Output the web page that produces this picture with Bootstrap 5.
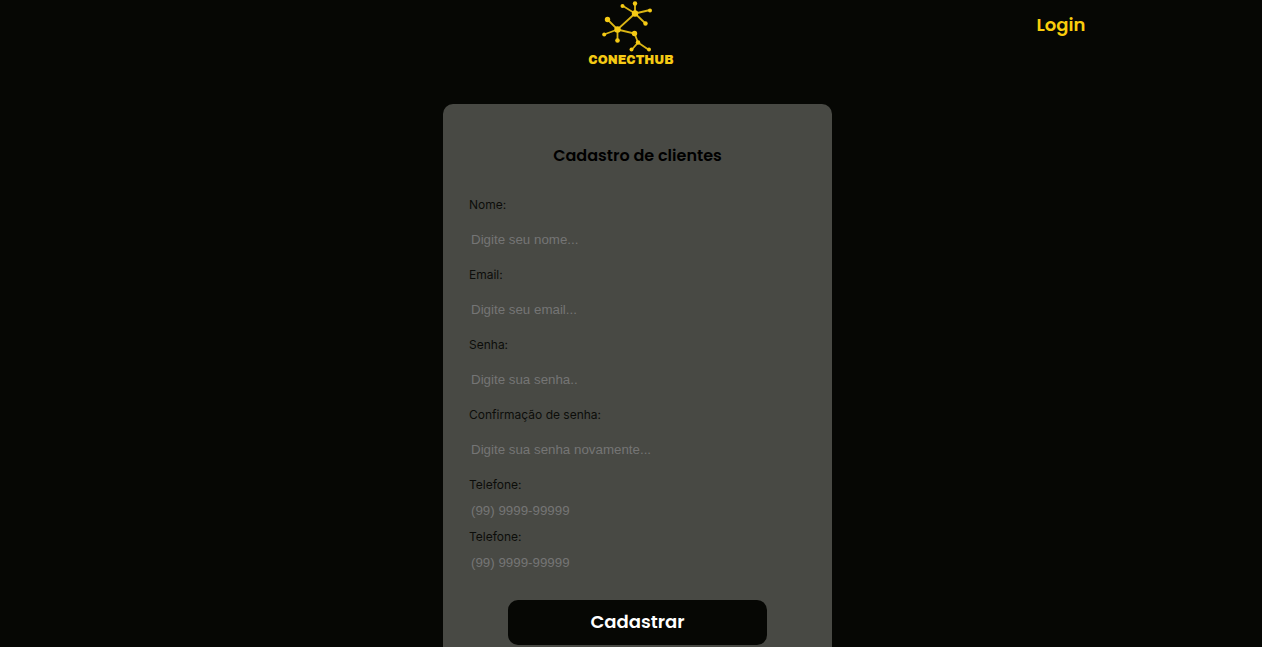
<!DOCTYPE html>
<html lang="pt-BR">
<head>
<meta charset="utf-8">
<meta name="viewport" content="width=device-width, initial-scale=1">
<title>ConectHub - Cadastro de clientes</title>
<link href="https://cdn.jsdelivr.net/npm/bootstrap@5.3.0/dist/css/bootstrap.min.css" rel="stylesheet">
<style>
  body { background: #060704; font-family: Inter, "Liberation Sans", sans-serif; }
  .brand { color: #f5ca14; font: 400 12px/14px "Archivo Black", Inter, sans-serif; }
  .login-area { padding-right: 42%; padding-top: 11px; }
  .login-link { color: #f9cd0c; font: 600 18px/28px Poppins, Inter, sans-serif; }
  .page-main { padding: 37px 0 40px 13px; }
  .signup { width: 389px; max-width: 100%; background: #484944; border-radius: 10px; padding: 38px 26px; }
  .signup h1 { font: 600 16px/28px Poppins, Inter, sans-serif; color: #000; margin-bottom: 26px; }
  .signup label { font-size: 12px; line-height: 18px; color: #0c0d0a; }
  .signup input { height: 52px; padding: 0 2px 2px; font-family: "Liberation Sans", Arial, sans-serif; font-size: revert; line-height: normal; color: #0c0d0a; }
  .signup input[type=tel] { height: 34px; }
  .signup input::placeholder { color: #757575; opacity: 1; }
  .submit { width: 259px; max-width: 100%; height: 45px; margin-top: 20px; background: #060704; border-radius: 10px; padding-bottom: 2px; font: 600 18px/28px Poppins, Inter, sans-serif; }
  .submit:hover { background: #1b1c17; }
</style>
</head>
<body>
<header class="row g-0">
  <div class="col-4 offset-4 text-center">
    <a href="#" class="brand d-inline-flex flex-column align-items-center text-decoration-none">
      <svg width="58" height="53" viewBox="0 0 58 53" fill="#f5ca14" aria-hidden="true">
        <path d="M21 6 33 13.500V3.500M33 13.500 48 10M33 13.500 43.500 23.500M33 13.500 15.500 29.500 5.500 19.500M15.500 29.500 2 34.500M15.500 29.500V40.500M15.500 29.500 32.500 33.500 36 42.500 29.500 50M36 42.500 47 50" fill="none" stroke="#d9b414" stroke-width="1.800"/>
        <circle cx="33" cy="13.500" r="3.200"/><circle cx="15.500" cy="29.500" r="3.200"/>
        <circle cx="33" cy="3.500" r="2.200"/><circle cx="20.500" cy="6" r="2"/><circle cx="48" cy="10.500" r="2"/><circle cx="43.500" cy="23.500" r="2.200"/>
        <circle cx="5.500" cy="19.500" r="2.700"/><circle cx="2.200" cy="34.500" r="2"/><circle cx="15.500" cy="40.500" r="2.300"/>
        <circle cx="32.500" cy="33.500" r="2.700"/><circle cx="36" cy="42.500" r="2.300"/><circle cx="29.500" cy="49.500" r="2"/><circle cx="47" cy="49.500" r="2"/>
      </svg>
      <span>CONECTHUB</span>
    </a>
  </div>
  <nav class="col-4">
    <div class="login-area text-end">
      <a href="#" class="login-link text-decoration-none">Login</a>
    </div>
  </nav>
</header>
<main class="page-main d-flex justify-content-center">
  <form class="signup">
    <h1 class="text-center">Cadastro de clientes</h1>
    <label for="nome" class="d-block">Nome:</label>
    <input id="nome" type="text" class="d-block w-100 border-0 bg-transparent" placeholder="Digite seu nome...">
    <label for="email" class="d-block">Email:</label>
    <input id="email" type="email" class="d-block w-100 border-0 bg-transparent" placeholder="Digite seu email...">
    <label for="senha" class="d-block">Senha:</label>
    <input id="senha" type="password" class="d-block w-100 border-0 bg-transparent" placeholder="Digite sua senha..">
    <label for="confirma" class="d-block">Confirmação de senha:</label>
    <input id="confirma" type="password" class="d-block w-100 border-0 bg-transparent" placeholder="Digite sua senha novamente...">
    <label for="tel1" class="d-block">Telefone:</label>
    <input id="tel1" type="tel" class="d-block w-100 border-0 bg-transparent" placeholder="(99) 9999-99999">
    <label for="tel2" class="d-block">Telefone:</label>
    <input id="tel2" type="tel" class="d-block w-100 border-0 bg-transparent" placeholder="(99) 9999-99999">
    <button type="submit" class="submit d-block mx-auto border-0 text-white">Cadastrar</button>
  </form>
</main>
<script src="https://cdn.jsdelivr.net/npm/bootstrap@5.3.0/dist/js/bootstrap.bundle.min.js"></script>
</body>
</html>
